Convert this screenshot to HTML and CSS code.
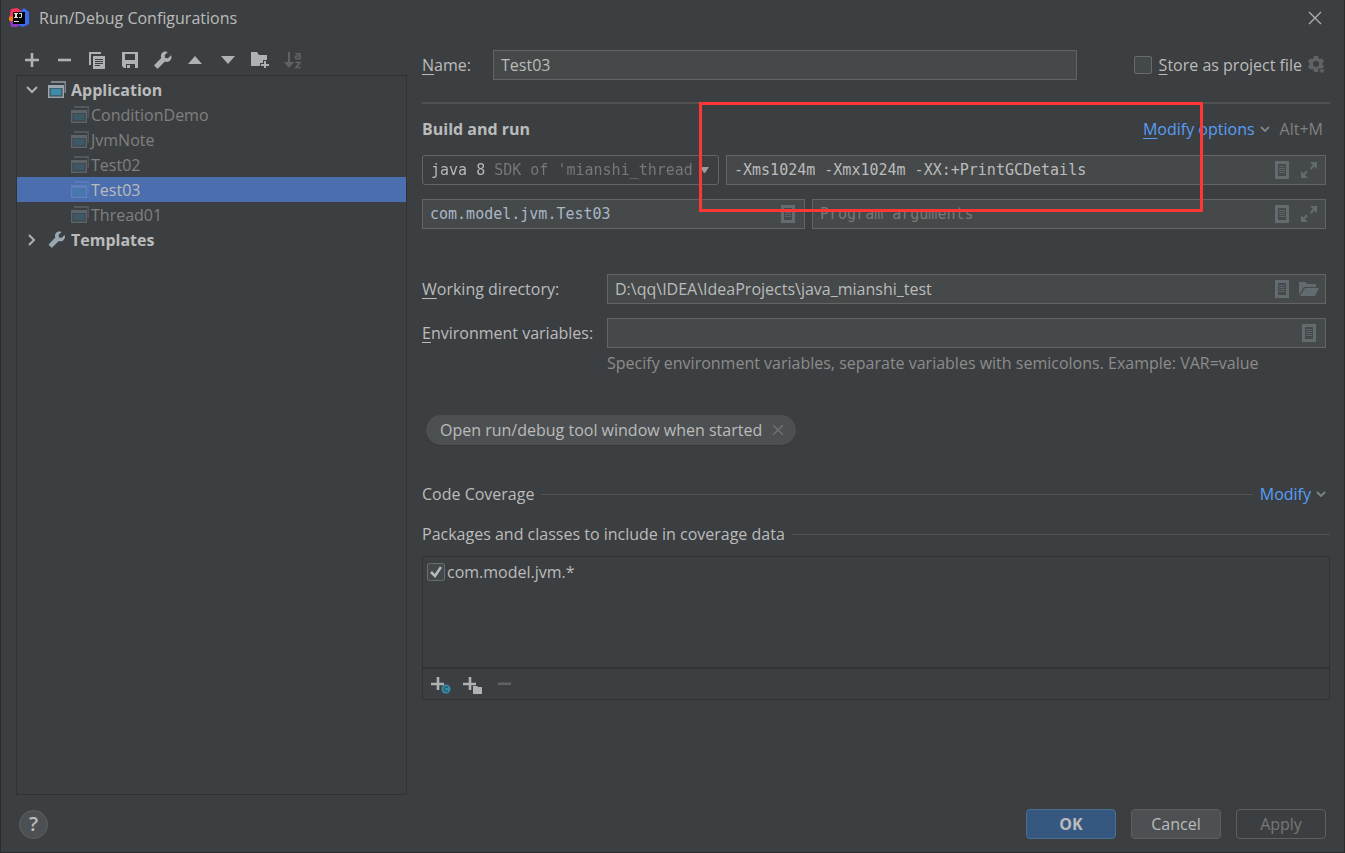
FILE: index.html
```html
<!DOCTYPE html>
<html lang="en">
<head>
<meta charset="utf-8">
<title>Run/Debug Configurations</title>
<link rel="stylesheet" href="styles.css">
</head>
<body>
<svg class="defs" aria-hidden="true">
  <defs>
    <symbol id="wrench" viewBox="0 0 18 18"><path d="M17 4.200 14 7.200 11 7 10.800 4 13.800 1C11.600 0 9.300.500 8 2 6.700 3.500 6.700 5.200 7.200 6.900L.600 13.700a1 1 0 0 0 0 1.400l2.200 2.200a1 1 0 0 0 1.400 0l6.700-6.700c1.700.600 3.800.400 5.200-1.100C17.500 8 17.900 6 17 4.200Z"/></symbol>
    <symbol id="app" viewBox="0 0 18 17"><path d="M3 0h15v12h-1.500V2H3Z" opacity=".7"/><path d="M0 4h16v13H0Z M1.500 7v8.500h13V7Z" fill-rule="evenodd"/><path class="app-fill" d="M2.500 7.500h11v7h-11Z"/></symbol>
    <symbol id="doc" viewBox="0 0 14 18"><path d="M0 0h14v18H0Z M3 3v12h8V3Z" fill-rule="evenodd"/><path d="M4 5h6v1H4Z M4 7h6v1H4Z M4 9h6v1H4Z M4 11h6v1H4Z" opacity=".8"/></symbol>
    <symbol id="expand" viewBox="0 0 16 16"><path d="M9 0h7v7l-2.500-2.500-3.200 3.200-1.500-1.500 3-3.200Z M0 9l2.300 2.400L5.300 8.400l1.600 1.500-3 3.100L7 16H0Z"/></symbol>
    <symbol id="chevron" viewBox="0 0 10 6"><path d="m1 1 4 4 4-4" fill="none" stroke="currentColor" stroke-width="1.800"/></symbol>
  </defs>
</svg>

<header class="titlebar">
  <svg class="logo" viewBox="0 0 20 20" aria-hidden="true">
    <path d="M2 1 8 0l5 3-9 8-4 1Z" fill="#fe315d"/>
    <path d="m0 9 5-1v7l-3-1-2-2Z" fill="#f97a12"/>
    <path d="m11 4 4-4 5 4v12l-6 3-5-2Z" fill="#3b6cf0"/>
    <path d="m1 14 4-2 6 5-3 2H2Z" fill="#8a3ac0"/>
    <path d="M4 4h12v12H4Z" fill="#050505"/>
    <path d="M5 5h4v1H8v3h1v1H5V9h1V6H5Z M10 5h3v4l-1 1h-2V9h2V6h-2Z M5 13h5v1H5Z" fill="#ddd"/>
  </svg>
  <h1>Run/Debug Configurations</h1>
  <button class="icon-btn close" aria-label="Close"><svg width="14" height="14" viewBox="0 0 14 14"><path d="m1 1 12 12M13 1 1 13" stroke="currentColor" stroke-width="1.300"/></svg></button>
</header>

<main class="main">
  <aside class="sidebar">
    <div class="toolbar">
      <button class="icon-btn" aria-label="Add"><svg width="14" height="14"><path d="M5.700 0h2.600v5.700H14v2.600H8.300V14H5.700V8.300H0V5.700h5.700Z"/></svg></button>
      <button class="icon-btn" aria-label="Remove"><svg width="14" height="14"><path d="M0 5.700h13v2.600H0Z"/></svg></button>
      <button class="icon-btn" aria-label="Copy"><svg width="16" height="17"><path d="M0 0h12v2H2v11H0Z"/><path fill-rule="evenodd" d="M4 4h12v13H4Z M6 7v1h8V7Z M6 9v1h8V9Z M6 11v1h8v-1Z M6 13v1h5v-1Z"/></svg></button>
      <button class="icon-btn" aria-label="Save"><svg width="16" height="16"><path fill-rule="evenodd" d="M0 0h16v16h-3v-4H4v4H2l-2-2Z M3 2v6h10V2Z"/><path d="M5 13h3v3H5Z"/></svg></button>
      <button class="icon-btn" aria-label="Edit templates"><svg width="18" height="18"><use href="#wrench"/></svg></button>
      <button class="icon-btn" aria-label="Move up"><svg width="14" height="8"><path d="m7 0 7 8H0Z"/></svg></button>
      <button class="icon-btn" aria-label="Move down"><svg width="14" height="8"><path d="M0 0h14L7 8Z"/></svg></button>
      <button class="icon-btn" aria-label="New folder"><svg width="18" height="16"><path d="M0 0h6l2 3h8v5h-4v3H9v3H0Z"/><path d="M13 9h2v3h3v2h-3v3h-2v-3h-3v-2h3Z"/></svg></button>
      <button class="icon-btn" aria-label="Sort" disabled><svg width="18" height="17"><path d="M4 0h2v10h4l-5 6-5-6h4Z"/><path d="M11.500 1.700h4.500V7M16 4h-3.200a1.400 1.400 0 0 0 0 2.800H16M11.500 10.500h4.500l-4 5h4.500" fill="none" stroke="currentColor" stroke-width="1.600"/></svg></button>
    </div>
    <ul class="tree">
      <li class="node group"><svg class="arrow" width="12" height="8" viewBox="0 0 12 8"><path d="m1 1 5 5 5-5"/></svg><svg class="app-icon"><use href="#app"/></svg>Application</li>
      <li class="node leaf"><svg class="app-icon"><use href="#app"/></svg>ConditionDemo</li>
      <li class="node leaf"><svg class="app-icon"><use href="#app"/></svg>JvmNote</li>
      <li class="node leaf"><svg class="app-icon"><use href="#app"/></svg>Test02</li>
      <li class="node leaf selected"><svg class="app-icon"><use href="#app"/></svg>Test03</li>
      <li class="node leaf"><svg class="app-icon"><use href="#app"/></svg>Thread01</li>
      <li class="node group"><svg class="arrow" width="12" height="12" viewBox="0 0 12 12"><path d="m3 1 5 5-5 5"/></svg><svg class="app-icon"><use href="#wrench"/></svg>Templates</li>
    </ul>
  </aside>

  <form class="editor">
    <div class="name-row">
      <label for="name"><u>N</u>ame:</label>
      <div class="field name-field"><input id="name" type="text" value="Test03"></div>
      <label class="check store"><input type="checkbox"><span><u>S</u>tore as project file</span></label>
      <button type="button" class="icon-btn gear" aria-label="Storage settings"><svg width="18" height="18"><path fill-rule="evenodd" d="M6 0h4l.500 2.300 1.300.800 2.200-.700 2 3.400L14.400 7.300v1.500L16 10.300l-2 3.300-2.200-.700-1.300.800L10 16H6l-.500-2.300-1.300-.800-2.200.700-2-3.300 1.600-1.500V7.300L0 5.800l2-3.400 2.200.700 1.300-.800Z M8 5a3 3 0 1 0 0 6 3 3 0 0 0 0-6Z"/><path class="gear-drop" d="M10 13h8l-4 5Z"/></svg></button>
    </div>

    <section class="build">
      <div class="build-head">
        <h2>Build and run</h2>
        <a href="#options"><u>M</u>odify options</a>
        <svg class="chev"><use href="#chevron"/></svg>
        <span class="shortcut">Alt+M</span>
      </div>
      <div class="row row-vm">
        <div class="combo">
          <select aria-label="JRE"><option>java 8 SDK of 'mianshi_thread</option></select>
          <svg width="9" height="6"><path d="M0 0h9L5 6H4Z"/></svg>
        </div>
        <div class="field mono">
          <input type="text" aria-label="VM options" value="-Xms1024m -Xmx1024m -XX:+PrintGCDetails">
          <button type="button" class="icon-btn" aria-label="Insert macro"><svg width="14" height="18"><use href="#doc"/></svg></button>
          <button type="button" class="icon-btn" aria-label="Expand"><svg width="16" height="16"><use href="#expand"/></svg></button>
        </div>
      </div>
      <div class="row row-class">
        <div class="field mono class-field">
          <input type="text" aria-label="Main class" value="com.model.jvm.Test03">
          <button type="button" class="icon-btn" aria-label="Browse class"><svg width="14" height="18"><use href="#doc"/></svg></button>
        </div>
        <div class="field mono">
          <input type="text" aria-label="Program arguments" placeholder="Program arguments">
          <button type="button" class="icon-btn" aria-label="Insert macro"><svg width="14" height="18"><use href="#doc"/></svg></button>
          <button type="button" class="icon-btn" aria-label="Expand"><svg width="16" height="16"><use href="#expand"/></svg></button>
        </div>
      </div>
      <div class="highlight"></div>
    </section>

    <section class="env">
      <label for="dir"><u>W</u>orking directory:</label>
      <div class="field">
        <input id="dir" type="text" value="D:\qq\IDEA\IdeaProjects\java_mianshi_test">
        <button type="button" class="icon-btn" aria-label="Insert macro"><svg width="14" height="18"><use href="#doc"/></svg></button>
        <button type="button" class="icon-btn" aria-label="Browse"><svg width="20" height="14"><path d="M0 0h6l2 2h9v3H5L0 13Z"/><path d="M6 6h14l-4 8H1Z"/></svg></button>
      </div>
      <label for="vars"><u>E</u>nvironment variables:</label>
      <div class="field">
        <input id="vars" type="text">
        <button type="button" class="icon-btn" aria-label="Edit variables"><svg width="14" height="18"><use href="#doc"/></svg></button>
      </div>
      <p class="hint">Specify environment variables, separate variables with semicolons. Example: VAR=value</p>
    </section>

    <div class="chip">Open run/debug tool window when started
      <button type="button" class="icon-btn" aria-label="Remove option"><svg width="10" height="10"><path d="m0 0 10 10M10 0 0 10" stroke="currentColor" stroke-width="1.300"/></svg></button>
    </div>

    <div class="rule-head"><h3>Code Coverage</h3><a href="#modify">Modify</a><svg class="chev"><use href="#chevron"/></svg></div>
    <div class="rule-head packages"><h3>Packages and classes to include in coverage data</h3></div>
    <div class="coverage">
      <div class="coverage-list">
        <label class="check"><span class="box"><input type="checkbox" checked><svg width="12" height="12"><path d="m1 6 4 4 6-9" fill="none" stroke="#b8bbbd" stroke-width="2.500"/></svg></span><span>com.model.jvm.*</span></label>
      </div>
      <div class="coverage-tools">
        <button type="button" class="icon-btn" aria-label="Add class"><svg width="20" height="18"><path d="M5.700 0h2.600v5.700H13v2.600H8.300V13H5.700V8.300H0V5.700h5.700Z"/><circle cx="15" cy="12" r="4.500" fill="#3a8aa8"/><path d="M17 10.500a2.200 2.200 0 1 0 0 3" fill="none" stroke="#23566b" stroke-width="1.200"/></svg></button>
        <button type="button" class="icon-btn" aria-label="Add package"><svg width="20" height="18"><path d="M5.700 0h2.600v5.700H13v2.600H8.300V13H5.700V8.300H0V5.700h5.700Z"/><path d="M10 9h4l1 1h4v7h-9Z"/></svg></button>
        <button type="button" class="icon-btn" aria-label="Remove" disabled><svg width="20" height="18"><path d="M3 5.500h13V8H3Z"/></svg></button>
      </div>
    </div>
  </form>
</main>

<footer class="footer">
  <button class="help" aria-label="Help">?</button>
  <button class="btn primary">OK</button>
  <button class="btn">Cancel</button>
  <button class="btn" disabled>Apply</button>
</footer>
</body>
</html>
```
FILE: styles.css
```css
* { box-sizing: border-box; }

body {
  margin: 0;
  min-height: 100vh;
  display: flex;
  flex-direction: column;
  background: #3c3f41;
  border: 1px solid #2b2b2b;
  border-top: 0;
  color: #bbbbbb;
  font: 16px/24px "Open Sans", "Noto Sans", sans-serif;
}

button, input, select { font: inherit; color: inherit; }
h1, h2, h3, p, ul { margin: 0; padding: 0; font: inherit; }
svg { display: block; fill: currentColor; flex: none; }
a { color: #589df6; text-decoration: none; }
u { text-underline-offset: 3px; }
.defs { position: absolute; width: 0; height: 0; }

.icon-btn {
  display: grid;
  place-items: center;
  width: 20px;
  height: 20px;
  padding: 0;
  border: 0;
  background: none;
  color: #afb1b3;
}
.icon-btn:disabled { color: #606366; }

.titlebar {
  display: flex;
  align-items: center;
  gap: 10px;
  height: 36px;
  padding: 0 19px 0 8px;
}
.logo { width: 20px; height: 20px; }
.close { margin-left: auto; }

.main {
  flex: 1;
  display: grid;
  grid-template-columns: 391px 1fr;
  gap: 15px;
  padding: 0 14px 0 15px;
}

.sidebar { display: flex; flex-direction: column; padding-top: 14px; }
.toolbar {
  display: flex;
  justify-content: space-between;
  width: 281px;
  margin: 0 0 5px 6px;
}

.tree {
  flex: 1;
  padding-top: 1px;
  border: 1px solid #323232;
  list-style: none;
}
.node { display: flex; align-items: center; height: 25px; }
.group { gap: 5px; padding-left: 9px; font-weight: bold; }
.arrow { margin-right: 5px; fill: none; stroke: #afb1b3; stroke-width: 2; }
.app-icon { width: 18px; height: 17px; color: #9aa7b0; }
.app-fill { fill: #3d8ba8; }
.leaf { gap: 2px; padding-left: 54px; color: #808080; }
.leaf .app-icon { opacity: 0.35; }
.selected { background: #4b6eaf; color: #bbbbbb; }
.selected .app-icon { color: #7f9fd8; }
.selected .app-fill { fill: #4ba0e0; }

.editor { min-width: 0; padding-top: 14px; }

.field {
  display: flex;
  align-items: center;
  gap: 7px;
  min-width: 0;
  height: 30px;
  padding: 0 6px 0 7px;
  border: 1px solid #646464;
  background: #45494a;
}
.field input {
  flex: 1;
  min-width: 0;
  width: 100%;
  padding: 0;
  border: 0;
  outline: 0;
  background: none;
}
.field .icon-btn { color: #626c70; }
.mono { font-family: "DejaVu Sans Mono", monospace; font-size: 15px; }
.field input::placeholder { color: #787878; opacity: 1; }

.name-row {
  display: flex;
  align-items: center;
  padding: 0 3px 22px 0;
  border-bottom: 2px solid #515151;
}
.name-row > label:first-child { width: 71px; }
.name-field { flex: 0 1 584px; }

.check { display: flex; align-items: center; gap: 7px; }
.check input {
  appearance: none;
  width: 18px;
  height: 18px;
  margin: 0;
  border: 1px solid #6b6b6b;
  border-radius: 2px;
  background: #43494a;
}
.store { margin-left: auto; white-space: nowrap; }
.gear { margin-left: 5px; color: #606366; }
.gear-drop { stroke: #3c3f41; }

.build { position: relative; padding-right: 4px; }
.build-head { display: flex; align-items: center; height: 49px; padding-right: 3px; }
.build-head h2 { margin-right: auto; font-weight: bold; }
.chev { width: 10px; height: 6px; margin-left: 5px; color: #7f8487; }
.shortcut { margin-left: 10px; color: #808080; }
.row { display: grid; gap: 7px; }
.row-vm { grid-template-columns: 297fr 600fr; margin: 2px 0 14px; }
.row-class { grid-template-columns: 383fr 514fr; }
.class-field { color: #a9b7c6; }

.combo {
  display: flex;
  align-items: center;
  min-width: 0;
  height: 30px;
  padding: 0 9px 0 8px;
  border: 1px solid #646464;
  border-radius: 3px;
  color: #9a9da0;
}
.combo select {
  flex: 1;
  min-width: 0;
  appearance: none;
  padding: 0;
  border: 0;
  background: linear-gradient(90deg, #bbbbbb 58px, #787878 58px);
  background-clip: text;
  color: transparent;
  font: 15px/24px "DejaVu Sans Mono", monospace;
}

/* Frame drawn over the VM options */
.highlight {
  position: absolute;
  top: -2px;
  left: 277px;
  right: 127px;
  height: 110px;
  border: 3px solid #ff3636;
  pointer-events: none;
}

.env {
  display: grid;
  grid-template-columns: 185px 1fr;
  align-items: center;
  row-gap: 14px;
  padding: 45px 4px 0 0;
}
.hint { grid-column: 2; margin-top: -11px; color: #8c8c8c; white-space: nowrap; }

.chip {
  display: flex;
  align-items: center;
  gap: 6px;
  width: max-content;
  height: 30px;
  margin: 40px 0 0 4px;
  padding: 0 8px 0 14px;
  border-radius: 15px;
  background: #4c5052;
  box-shadow: 0 1px 1px #35383a;
}
.chip .icon-btn { color: #6f7375; }

.rule-head { display: flex; align-items: center; margin-top: 37px; padding-right: 4px; }
.rule-head h3 { display: contents; }
.rule-head::before { content: ""; order: 1; flex: 1; height: 1px; margin: 0 7px; background: #515151; }
.rule-head a, .rule-head .chev { order: 2; }
.packages { margin-top: 16px; padding-right: 0; }
.packages::before { margin-right: 0; }

.coverage { margin-top: 10px; border: 1px solid #323232; }
.coverage-list { height: 112px; padding: 3px 4px; border-bottom: 2px solid #323232; }
.coverage-list .check { gap: 2px; }
.box { display: grid; place-items: center; }
.box > * { grid-area: 1 / 1; }
.coverage-tools { display: flex; gap: 12px; height: 30px; padding: 7px 8px; }

.footer {
  display: flex;
  align-items: center;
  gap: 15px;
  padding: 14px 18px 13px;
}
.help {
  width: 29px;
  height: 29px;
  margin-right: auto;
  padding: 0;
  border: 1px solid #5e6060;
  border-radius: 50%;
  background: #4c5052;
  font-size: 20px;
  font-weight: 600;
}
.btn {
  width: 90px;
  height: 30px;
  padding: 0;
  border: 1px solid #5e6060;
  border-radius: 4px;
  background: #4c5052;
}
.btn:disabled { background: none; color: #777777; }
.primary { border-color: #4c708c; background: #365880; font-weight: bold; }
```
